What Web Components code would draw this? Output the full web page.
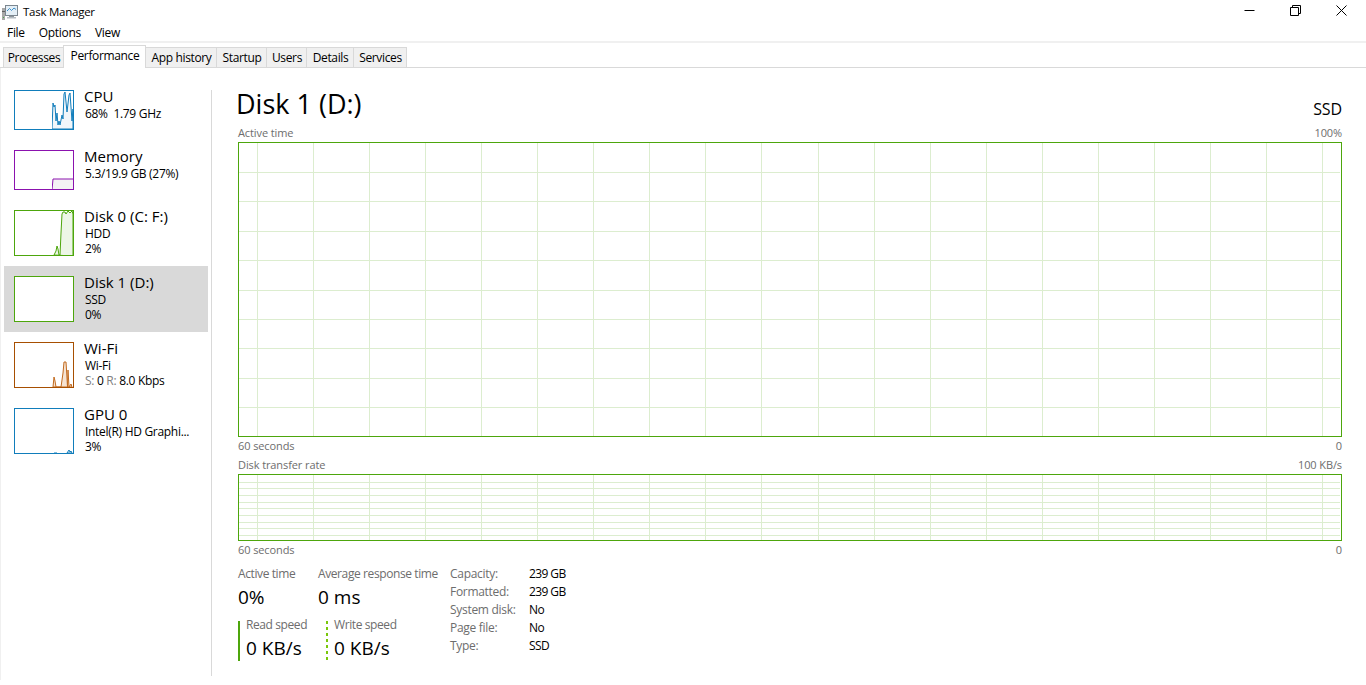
<!DOCTYPE html>
<html><head><meta charset="utf-8"><title>Task Manager</title>
<style>
html,body{margin:0;padding:0;height:100%;background:#fff;overflow:hidden}
body{width:1366px;height:685px;font-family:"Open Sans","Noto Sans","Liberation Sans",sans-serif;font-size:12px;color:#000;display:flex;flex-direction:column}
</style></head><body>
<tm-titlebar></tm-titlebar>
<tm-menubar></tm-menubar>
<tm-tabs></tm-tabs>
<tm-body>
 <tm-sidebar slot="side">
  <tm-item name="CPU" l1="68%&#160;&#160;1.79 GHz" color="#117dbb" fill="#f1f6fa" h="40" mt="0" sx="37" lite="1" spark="M0 38 L1 12 L2 16 L3 14 L4 30 L5 22 L6 34 L7 30 L8 34 L10 24 L11 28 L12 3 L13 1 L15 21 L17 4 L18 2 L20 30 L21 18 L21 38 Z"></tm-item>
  <tm-item name="Memory" l1="5.3/19.9 GB (27%)" color="#8b12ae" fill="#f4f2f4" h="40" mt="20" sx="37" spark="M0 39 L1 28 H22 V39 Z" lite="1"></tm-item>
  <tm-item name="Disk 0 (C: F:)" l1="HDD" l2="2%" color="#4da60c" fill="#edf6e7" h="46" mt="20" sx="38" spark="M1 44 L3 40 L4 35 L5 38 L6 44 L7 44 L8 22 L9 3 L10 1 L12 1 L13 3 L15 0 L17 2 L19 0 L20 3 L20 45 Z" lite="1"></tm-item>
  <tm-item name="Disk 1 (D:)" l1="SSD" l2="0%" color="#4da60c" h="46" mt="10" selected></tm-item>
  <tm-item name="Wi-Fi" l1="Wi-Fi" l2="&lt;s&gt;S:&lt;/s&gt; 0 &lt;s&gt;R:&lt;/s&gt; 8.0 Kbps" color="#c26a1e" fill="#f6e3d2" h="46" bc="#a74f01" mt="10" sx="37" lite="1" spark="M1 44 L2 34 L3 38 L4 44 L9 44 L11 30 L12 19 L14 19 L15 35 L15.500 44 L16 27 L17 44 L19 41 L20 44 Z"></tm-item>
  <tm-item name="GPU 0" l1="Intel(R) HD Graphi..." l2="3%" color="#117dbb" fill="#f1f6fa" h="46" mt="20" sx="37" lite="1" spark="M2 44 H5 M15 44 L17 41 L18 43 L19 42 L20 44 Z"></tm-item>
 </tm-sidebar>
 <tm-main slot="main">
  <tm-heading title-text="Disk 1 (D:)" kind="SSD"></tm-heading>
  <tm-graph tl="Active time" tr="100%" bl="60 seconds" br="0" h="295" step="29.4" offset="29.9" n="9"></tm-graph>
  <tm-graph tl="Disk transfer rate" tr="100 KB/s" bl="60 seconds" br="0" h="67" step="6.65" offset="7.6" n="9" style="margin-top:4px"></tm-graph>
  <tm-stats></tm-stats>
 </tm-main>
</tm-body>
<script>
function def(name, css, html){
  customElements.define(name, class extends HTMLElement{
    connectedCallback(){
      if(this.shadowRoot) return;
      const r=this.attachShadow({mode:'open'});
      const a=k=>this.getAttribute(k);
      r.innerHTML='<style>'+css+'</style>'+(typeof html==='function'?html(a,this):html);
    }
  });
}
def('tm-titlebar',`:host{display:flex;align-items:center;height:25px;flex:none;padding-right:2px;box-sizing:border-box}
.ic{margin:3px 4px 0 1px;display:block;align-self:flex-start}
.t{flex:1;margin-top:-2px;font-size:11.5px;letter-spacing:-.25px}
.b{width:46px;height:25px;display:flex;align-items:center;justify-content:center;margin-top:-5px}`,
`<svg class="ic" width="18" height="18" viewBox="0 0 18 18"><rect x="1" y="5" width="3" height="12" fill="#a8a8a8"/><rect x="1" y="8" width="3" height="1" fill="#5f5f5f"/><rect x="2" y="14" width="1" height="1" fill="#4caf50"/><rect x="4.500" y="2.500" width="12" height="10" fill="#e4eff7" stroke="#7c8790"/><path d="M6 8l2.500-2.500 2 2 2.500-2.500 2 1.500" fill="none" stroke="#3d8fc9"/><rect x="8" y="13" width="5" height="1" fill="#8f979d"/><rect x="6" y="14" width="9" height="1.500" fill="#b5bcc2"/></svg>
<span class="t">Task Manager</span>
<span class="b"><svg width="11" height="11" viewBox="0 0 11 11"><path d="M0.500 5.500H10.500" stroke="#000" fill="none"/></svg></span>
<span class="b"><svg width="11" height="11" viewBox="0 0 11 11"><path d="M.5 2.500h8v8h-8zM2.500 2.500v-2h8v8h-2" stroke="#000" fill="none"/></svg></span>
<span class="b"><svg width="11" height="11" viewBox="0 0 11 11"><path d="M.5.500l10 10M10.500.500l-10 10" stroke="#000" fill="none"/></svg></span>`);
def('tm-menubar',`:host{display:flex;height:16px;flex:none;padding-left:7px;line-height:16px;gap:14px;border-bottom:2px solid #f0f0f0;letter-spacing:-.3px}
span{display:block}`,`<span>File</span><span>Options</span><span>View</span>`);
def('tm-tabs',`:host{display:flex;height:24px;flex:none;padding-left:3px;align-items:flex-end;border-bottom:1px solid #d9d9d9;letter-spacing:-.35px}
span{display:flex;align-items:center;justify-content:center;height:20px;box-sizing:border-box;padding-left:1px;background:#f0f0f0;border:1px solid #d9d9d9;border-bottom:0;border-left:0;position:relative}
.f{border-left:1px solid #d9d9d9;border-right:0}
.a{height:23px;background:#fff;margin-bottom:-1px;z-index:1;padding-bottom:3px;border-left:1px solid #d9d9d9}`,
[['Processes',60,'f'],['Performance',83,'a'],['App history',71],['Startup',50],['Users',40],['Details',47],['Services',53]].map(t=>`<span class="${t[2]||''}" style="width:${t[1]}px">${t[0]}</span>`).join(''));
def('tm-body',`:host{display:flex;flex:1;min-height:0;border-left:1px solid #f0f0f0;margin-bottom:5px}
.s{display:block;width:210px;flex:none;border-right:1px solid #d9d9d9;margin:22px 0 4px}
.m{display:block;flex:1;min-width:0}`,`<slot class="s" name="side"></slot><slot class="m" name="main"></slot>`);
def('tm-sidebar',`:host{display:flex;flex-direction:column;padding-left:3px}`,`<slot></slot>`);
def('tm-item',`:host{display:block;width:204px;box-sizing:border-box}
.r{display:flex;padding:0 0 0 10px;gap:10px;box-sizing:content-box}
.r.sel{background:#d9d9d9;padding-top:10px;padding-bottom:10px}
.th{width:60px;box-sizing:border-box;border:1px solid;background:#fff;position:relative;flex:none;overflow:hidden}
svg{position:absolute;display:block}
.tx{min-width:0;line-height:15px;margin-top:-4px;white-space:nowrap;letter-spacing:-.3px}
.tx div:not(.n){margin-left:1px}
.n{font-size:15px;line-height:20px;letter-spacing:0}
s{text-decoration:none;color:#808080}`,
(a,el)=>{
 const sel=el.hasAttribute('selected');const h=+a('h');const sp=a('spark');const sx=+(a('sx')||27);
 let svg='';
 if(sp) svg=`<svg style="left:${sx}px;top:0" width="${58-sx}" height="${h-2}" viewBox="0 0 ${58-sx} ${h-2}"><path d="${sp}" fill="${a('fill')||'none'}" stroke="${a('color')}" stroke-width="1" stroke-linejoin="round"/></svg>`;
 const l2=a('l2')?`<div>${a('l2')}</div>`:'';
 return `<div class="r ${sel?'sel':''}" style="margin-top:${a('mt')}px;height:${h}px"><div class="th" style="height:${h}px;border-color:${a('bc')||a('color')}">${svg}</div><div class="tx"><div class="n">${a('name')}</div><div>${a('l1')}</div>${l2}</div></div>`;
});
def('tm-main',`:host{display:block;padding:18px 24px 0 26px}`,`<slot></slot>`);
def('tm-heading',`:host{display:flex;justify-content:space-between;align-items:flex-end;height:39px}
h1{font-size:27px;font-weight:400;margin:0 0 0 -2px;line-height:35px;color:#000;align-self:flex-start}
span{font-size:16px;line-height:20px;margin-bottom:6px;letter-spacing:-.1px}`,
a=>`<h1>${a('title-text')}</h1><span>${a('kind')}</span>`);
def('tm-graph',`:host{display:block;color:#6d6d6d;font-size:11px;letter-spacing:-.1px}
.l{display:flex;justify-content:space-between;line-height:15px}
.g{box-sizing:border-box;border:1px solid #4da60c;background:#fff;margin:2px 0 1px}
svg{display:block}`,
a=>{
 const h=+a('h'),step=+a('step'),off=+a('offset'),n=+a('n');
 let p='';
 for(let i=0;i<n;i++){const y=Math.round(off+i*step)-.5;p+=`M0 ${y}H1101`;}
 for(let i=0;i<20;i++){const x=Math.round(18+i*56.05)+.5;p+=`M${x} 0V${h-2}`;}
 return `<div class="l"><span>${a('tl')}</span><span>${a('tr')}</span></div><div class="g" style="height:${h}px"><svg width="1102" height="${h-2}"><path d="${p}" stroke="#dcedcf" fill="none"/></svg></div><div class="l"><span>${a('bl')}</span><span>${a('br')}</span></div>`;
});
def('tm-stat',`:host{display:block;color:#6d6d6d;font-size:12px;line-height:16px;letter-spacing:-.4px;white-space:nowrap}
b{display:block;font-weight:400;font-size:19px;line-height:26px;color:#000;margin-top:2px;letter-spacing:0}`,
a=>`${a('label')}<b>${a('value')}</b>`);
def('tm-stats',`:host{display:flex;margin-top:9px}
.left{display:grid;grid-template-columns:80px 132px;row-gap:11px;align-content:start}
.sp{padding-left:6px;height:40px;border-left:2px solid #4da60c}
.sp.d{border-left:0;padding-left:8px;margin-left:8px;background:repeating-linear-gradient(#7ac70c 0 3px,transparent 3px 6px) left top/2px 100% no-repeat}
.sp tm-stat{margin-top:-4px}
.kv{display:grid;grid-template-columns:79px auto;grid-auto-rows:18px;line-height:16px;align-content:start;letter-spacing:-.6px}
.kv span:nth-child(odd){color:#6d6d6d;letter-spacing:-.3px}`,
`<div class="left"><tm-stat label="Active time" value="0%"></tm-stat><tm-stat label="Average response time" value="0 ms"></tm-stat>
<div class="sp"><tm-stat label="Read speed" value="0 KB/s"></tm-stat></div><div class="sp d"><tm-stat label="Write speed" value="0 KB/s"></tm-stat></div></div>
<div class="kv"><span>Capacity:</span><span>239 GB</span><span>Formatted:</span><span>239 GB</span><span>System disk:</span><span>No</span><span>Page file:</span><span>No</span><span>Type:</span><span>SSD</span></div>`);
</script>
</body></html>
